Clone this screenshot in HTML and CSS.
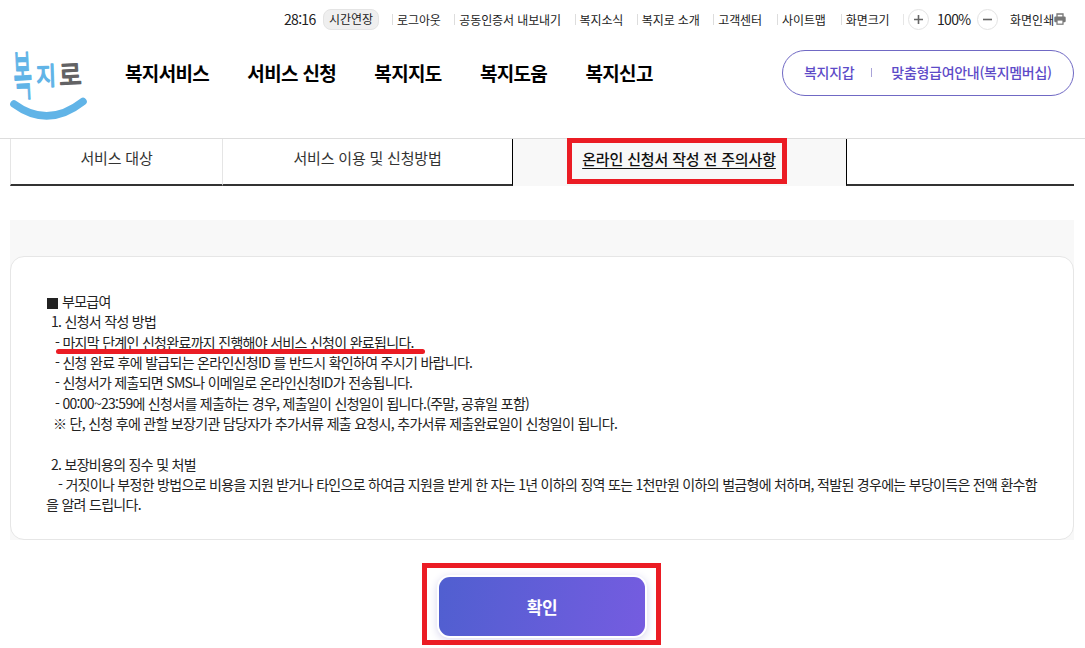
FILE: index.html
```html
<!DOCTYPE html>
<html lang="ko">
<head>
  <meta charset="UTF-8">
  <meta name="viewport" content="width=device-width, initial-scale=1.0">
  <title>복지로</title>
  <link rel="stylesheet" href="styles.css">
</head>
<body>
  <header class="header">
    <div class="util">
      <span class="time">28:16</span>
      <button class="extend">시간연장</button>
      <ul class="util-menu">
        <li>로그아웃</li>
        <li>공동인증서 내보내기</li>
        <li>복지소식</li>
        <li>복지로 소개</li>
        <li>고객센터</li>
        <li>사이트맵</li>
        <li>화면크기</li>
      </ul>
      <div class="zoom">
        <button class="round">
          <svg width="11" height="11" viewBox="0 0 11 11"><path d="M1 5.5h9M5.5 1v9" stroke="#666" stroke-width="1.6"/></svg>
        </button>
        <span class="percent">100%</span>
        <button class="round">
          <svg width="11" height="11" viewBox="0 0 11 11"><path d="M1 5.5h9" stroke="#666" stroke-width="1.6"/></svg>
        </button>
      </div>
      <span class="print">화면인쇄<svg width="12" height="12" viewBox="0 0 12 12"><path d="M3 4V1h6v3" fill="#fff" stroke="#777" stroke-width="1.3"/><rect x="0.3" y="3.6" width="11.4" height="5.6" rx="1.2" fill="#777"/><rect x="3" y="7" width="6" height="4.2" fill="#fff" stroke="#777" stroke-width="1.2"/></svg></span>
    </div>
    <div class="gnb">
      <svg class="logo" width="80" height="84" viewBox="0 -10 80 84">
        <g class="logo-text">
          <text class="blue" transform="translate(6.5 45.5) rotate(-3) scale(.84 2.2)">복</text>
          <text class="blue" transform="translate(28.5 35.5) rotate(-2) scale(.9 1.06)">지</text>
          <text class="gray" transform="translate(51.5 35.5) rotate(-3) scale(1.02 1.15)">로</text>
        </g>
        <path d="M6 54Q40 79 75 51.5" fill="none" stroke="#61b4e7" stroke-width="7.6" stroke-linecap="round"/>
      </svg>
      <nav class="menu">
        <a>복지서비스</a>
        <a>서비스 신청</a>
        <a>복지지도</a>
        <a>복지도움</a>
        <a>복지신고</a>
      </nav>
      <div class="pill">
        <a>복지지갑</a>
        <i></i>
        <a>맞춤형급여안내(복지멤버십)</a>
      </div>
    </div>
  </header>

  <main class="content">
    <div class="tabs">
      <div class="tab">서비스 대상</div>
      <div class="tab">서비스 이용 및 신청방법</div>
      <div class="tab on"><span class="mark">온라인 신청서 작성 전 주의사항</span></div>
      <div class="tab"></div>
    </div>
    <section class="panel">
      <div class="card">
        <p><span class="square"></span>부모급여</p>
        <p class="num">1. 신청서 작성 방법</p>
        <p class="item"><span class="redline">- 마지막 단계인 신청완료까지 진행해야 서비스 신청이 완료됩니다.</span></p>
        <p class="item">- 신청 완료 후에 발급되는 온라인신청ID 를 반드시 확인하여 주시기 바랍니다.</p>
        <p class="item">- 신청서가 제출되면 SMS나 이메일로 온라인신청ID가 전송됩니다.</p>
        <p class="item">- 00:00~23:59에 신청서를 제출하는 경우, 제출일이 신청일이 됩니다.(주말, 공휴일 포함)</p>
        <p class="note">※ 단, 신청 후에 관할 보장기관 담당자가 추가서류 제출 요청시, 추가서류 제출완료일이 신청일이 됩니다.</p>
        <p class="num second">2. 보장비용의 징수 및 처벌</p>
        <p class="penalty">- 거짓이나 부정한 방법으로 비용을 지원 받거나 타인으로 하여금 지원을 받게 한 자는 1년 이하의 징역 또는 1천만원 이하의 벌금형에 처하며, 적발된 경우에는 부당이득은 전액 환수함<br>을 알려 드립니다.</p>
      </div>
    </section>
    <div class="confirm">
      <button class="btn">확인</button>
    </div>
  </main>
</body>
</html>
```
FILE: styles.css
```css
* {
  box-sizing: border-box;
}
body {
  margin: 0;
  height: 648px;
  overflow: hidden;
  background: #fff;
  color: #222;
  font-family: "Noto Sans CJK KR", sans-serif;
}
ul, p {
  margin: 0;
  padding: 0;
  list-style: none;
}
button {
  border: 0;
  padding: 0;
  font-family: inherit;
}
svg {
  display: block;
}
.header {
  height: 139px;
  border-bottom: 1px solid #ddd;
}

/* top utility row */
.util {
  display: flex;
  align-items: center;
  height: 38px;
  padding-left: 284px;
  font-size: 12px;
  white-space: nowrap;
}
.time, .percent {
  font-size: 14px;
  letter-spacing: -0.7px;
}
.time {
  width: 39px;
}
.extend {
  width: 56px;
  height: 21px;
  border: 1px solid #e4e4e4;
  border-radius: 8px;
  background: #efefef;
  color: #222;
  font-size: 12px;
  line-height: 18px;
}
.util-menu {
  display: flex;
  margin-left: 13px;
  letter-spacing: -0.1px;
}
.util-menu li {
  display: flex;
  align-items: center;
  margin-right: 13.5px;
}
.util-menu li:nth-child(5),
.util-menu li:nth-child(6) {
  margin-right: 15px;
}
.util-menu li::before {
  content: "";
  width: 1px;
  height: 11px;
  margin-right: 4px;
  background: #ddd;
}
.zoom {
  display: flex;
  align-items: center;
  padding-left: 0;
}
.zoom::before {
  content: "";
  width: 1px;
  height: 11px;
  margin-right: 4px;
  background: #e6e6e6;
}
.round {
  display: flex;
  align-items: center;
  justify-content: center;
  width: 21px;
  height: 21px;
  border: 1px solid #e3e3e3;
  border-radius: 50%;
  background: #fff;
}
.percent {
  width: 48px;
  padding-left: 8px;
}
.print {
  display: flex;
  align-items: center;
  margin-left: 12px;
}

/* logo and main menu */
.gnb {
  display: flex;
  height: 100px;
  padding: 12px 11px 0 8px;
}
.logo {
  margin-top: -10px;
  overflow: visible;
}
.logo-text {
  font-size: 24px;
  stroke-width: 1.3px;
  stroke-linejoin: round;
}
.logo-text text {
  vector-effect: non-scaling-stroke;
}
.blue {
  fill: #61b4e7;
  stroke: #61b4e7;
}
.gray {
  fill: #626264;
  stroke: #626264;
}
.menu {
  display: flex;
  gap: 38.2px;
  margin: 9px auto 0 37px;
  color: #000;
  font-size: 19px;
  font-weight: 700;
  letter-spacing: -0.65px;
  line-height: 28px;
  white-space: nowrap;
}
.pill {
  display: flex;
  align-items: center;
  width: 292px;
  height: 46px;
  padding: 0 0 2px 21px;
  border: 1px solid #7069c4;
  border-radius: 23px;
  color: #5d4bc8;
  font-size: 14px;
  font-weight: 500;
  letter-spacing: -0.3px;
  white-space: nowrap;
}
.pill i {
  width: 1px;
  height: 9px;
  margin: 0 19px 0 17px;
  background: #a9a3d8;
}

.content {
  padding: 0 11px 0 10px;
}
.tabs {
  display: grid;
  grid-template-columns: 213px 290px 333px 1fr;
  height: 47px;
}
.tab {
  border-bottom: 2px solid #333;
  color: #333;
  font-size: 15px;
  letter-spacing: -0.2px;
  line-height: 38px;
  text-align: center;
}
.tab:first-child {
  border-left: 1px solid #e5e5e5;
  border-right: 1px solid #e5e5e5;
}
.tab:nth-child(2) {
  border-right: 1px solid #000;
}
.tab:last-child {
  border-left: 1px solid #000;
}
.tab.on {
  display: flex;
  justify-content: center;
  border-bottom: 0;
  background: #f8f8f8;
  color: #111;
  font-weight: 500;
}
.mark {
  width: 220px;
  height: 46px;
  margin: -1px 6px 0 0;
  padding-left: 5px;
  border: 5px solid #eb1c24;
  letter-spacing: -0.15px;
  line-height: 32px;
  text-decoration: underline;
  text-underline-offset: 3px;
  white-space: nowrap;
}

.panel {
  margin-top: 34px;
  padding-top: 36px;
  background: #f8f8f8;
}
.card {
  height: 284px;
  padding: 34px 0 0 35px;
  border: 1px solid #e6e6e6;
  border-radius: 14px;
  background: #fff;
  font-size: 14px;
  letter-spacing: -0.7px;
  line-height: 20.35px;
  white-space: nowrap;
}
.square {
  display: inline-block;
  width: 11px;
  height: 11px;
  margin: 0 4px 0 1px;
  background: #222;
  vertical-align: -2px;
}
.num {
  padding-left: 5px;
}
.second {
  margin-top: 20.3px;
}
.item {
  padding-left: 9px;
}
.note {
  padding-left: 7px;
}
.penalty {
  text-indent: 12px;
}
.redline {
  position: relative;
}
.redline::after {
  content: "";
  position: absolute;
  left: 1px;
  bottom: -2px;
  width: 369px;
  height: 5px;
  border-radius: 3px;
  background: #eb1c24;
}

.confirm {
  position: relative;
  width: 239px;
  height: 82px;
  margin: 23px 0 0 412px;
  padding: 14px 0 0 17px;
}
/* red frame stays above the button shadow */
.confirm::after {
  content: "";
  position: absolute;
  inset: 0;
  border: 5px solid #eb1c24;
}
.btn {
  width: 206px;
  height: 59px;
  border-radius: 11px;
  background: linear-gradient(100deg, #505fd0, #755ce0);
  box-shadow: 0 0 0 2px #fff, 0 2px 9px 2px #d8d7ee;
  color: #fff;
  font-size: 17px;
  font-weight: 700;
  letter-spacing: -0.5px;
}
```
